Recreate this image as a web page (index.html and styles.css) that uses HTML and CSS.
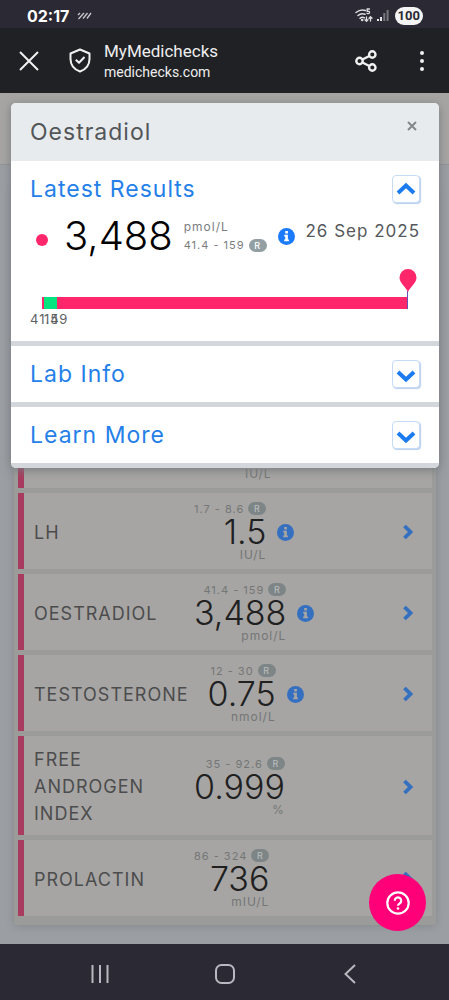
FILE: index.html
```html
<!DOCTYPE html>
<html lang="en">
<head>
<meta charset="utf-8">
<meta name="viewport" content="width=device-width, initial-scale=1">
<title>MyMedichecks</title>
<link rel="stylesheet" href="styles.css">
</head>
<body>
<div class="status">
  <span class="clock">02:17</span>
  <svg class="stripes" width="15" height="8" viewBox="0 0 15 8" fill="none" stroke="#c9c8cc" stroke-width="1.3"><path d="M1 3 3 1M1.500 7 7 1M6 6.500 10.500 1M10 6.500 14 1"/></svg>
  <svg class="wifi" width="18" height="15" viewBox="0 0 18 15" fill="none" stroke="#dddce0" stroke-width="1.5" stroke-linecap="round"><path d="M1 4.500C4 2 7.500 1.500 10.500 2.500M3 7.500c2-1.800 4.500-2.200 7-1.300M5 10.300c1.500-1.200 3-1.300 4.500-.5"/><circle cx="7.200" cy="12" r=".6" fill="#dddce0"/><path stroke-width="1.300" d="M14.500 1h-2.300v2.300c2-.3 2.600.4 2.300 1.500-.3.900-1.500 1-2.500.5M11.500 9v4M10 11.700l1.500 1.600 1.500-1.600M15.500 13V9M14 10.300l1.500-1.600 1.500 1.600"/></svg>
  <svg class="signal" width="12" height="13" viewBox="0 0 12 13"><path fill="#e6e5e8" d="M0 10h2v2H0zM3 8h2v4H3z"/><path fill="#77757d" d="M6.300 4h2v8h-2zM9.600 1h2v11h-2z"/></svg>
  <span class="battery">100</span>
</div>
<header class="toolbar">
  <button class="tool" aria-label="Close"><svg width="20" height="20" viewBox="0 0 20 20" fill="none" stroke="#f1f1f2" stroke-width="2"><path d="M1 1 19 19M19 1 1 19"/></svg></button>
  <button class="tool shield" aria-label="Site security"><svg width="22" height="25" viewBox="0 0 22 25" fill="none" stroke="#f1f1f2" stroke-width="2" stroke-linejoin="round"><path d="M11 1.500 20.500 5.500V11c0 6-4 10.500-9.500 12.500C5.500 21.500 1.500 17 1.500 11V5.500z"/><path d="m6.800 11.800 3.200 3 5.500-5.800"/></svg></button>
  <div class="site"><div class="site-name">MyMedichecks</div><div class="site-url">medichecks.com</div></div>
  <button class="tool" aria-label="Share"><svg width="22" height="22" viewBox="0 0 22 22" fill="none" stroke="#f1f1f2" stroke-width="2.400"><circle cx="4.500" cy="11" r="3.200"/><circle cx="17.300" cy="4.500" r="3.200"/><circle cx="17.300" cy="17.500" r="3.200"/><path d="m7.400 9.500 7-3.500M7.400 12.500l7 3.500"/></svg></button>
  <button class="tool more" aria-label="More"><svg width="4" height="20" viewBox="0 0 4 20" fill="#f1f1f2"><circle cx="2" cy="2" r="2"/><circle cx="2" cy="10" r="2"/><circle cx="2" cy="18" r="2"/></svg></button>
</header>

<main class="content">
  <svg hidden>
    <symbol id="info" viewBox="0 0 17 17"><circle cx="8.500" cy="8.500" r="8.500" fill="currentColor"/><path fill="var(--cut)" d="M7.200 3h2.700v2.500H7.200zM6.200 6.800h3.700v4.800h1V13.200H6.200v-1.600h1V8.400h-1z"/></symbol>
    <symbol id="next" viewBox="0 0 10 16"><path d="m1.500 2 6 6-6 6" fill="none" stroke="currentColor" stroke-width="3.800"/></symbol>
    <symbol id="down" viewBox="0 0 20 14"><path d="m2 3 8 7.500L18 3" fill="none" stroke="currentColor" stroke-width="4"/></symbol>
  </svg>
  <div class="page-head"></div>
  <div class="results">
    <a class="row" href="#"><span class="name"></span><span class="reading"><span class="unit">IU/L</span></span></a>
    <a class="row" href="#"><span class="name">LH</span><span class="reading"><span class="range">1.7 - 8.6 <b class="ref">R</b></span><span class="value">1.5</span><span class="unit">IU/L</span></span><svg class="info"><use href="#info"/></svg><svg class="next"><use href="#next"/></svg></a>
    <a class="row" href="#"><span class="name">OESTRADIOL</span><span class="reading"><span class="range">41.4 - 159 <b class="ref">R</b></span><span class="value">3,488</span><span class="unit">pmol/L</span></span><svg class="info"><use href="#info"/></svg><svg class="next"><use href="#next"/></svg></a>
    <a class="row" href="#"><span class="name">TESTOSTERONE</span><span class="reading"><span class="range">12 - 30 <b class="ref">R</b></span><span class="value">0.75</span><span class="unit">nmol/L</span></span><svg class="info"><use href="#info"/></svg><svg class="next"><use href="#next"/></svg></a>
    <a class="row" href="#"><span class="name">FREE ANDROGEN INDEX</span><span class="reading"><span class="range">35 - 92.6 <b class="ref">R</b></span><span class="value">0.999</span><span class="unit">%</span></span><svg class="next"><use href="#next"/></svg></a>
    <a class="row" href="#"><span class="name">PROLACTIN</span><span class="reading"><span class="range">86 - 324 <b class="ref">R</b></span><span class="value">736</span><span class="unit">mIU/L</span></span><svg class="next"><use href="#next"/></svg></a>
  </div>

  <div class="modal" role="dialog" aria-labelledby="modal-title">
    <div class="modal-head">
      <h1 id="modal-title">Oestradiol</h1>
      <button class="dismiss" aria-label="Close"><svg width="10" height="10" viewBox="0 0 10 10" stroke="#85888b" stroke-width="2"><path d="m1 1 8 8M9 1 1 9"/></svg></button>
    </div>
    <section>
      <div class="section-head"><h2>Latest Results</h2><button class="toggle open" aria-label="Collapse Latest Results"><svg width="20" height="14"><use href="#down"/></svg></button></div>
      <div class="latest">
        <span class="dot"></span>
        <span class="big">3,488</span>
        <span class="details"><span class="unit">pmol/L</span><span class="range">41.4 - 159 <b class="ref">R</b></span></span>
        <svg class="info"><use href="#info"/></svg>
        <time class="date" datetime="2025-09-26">26 Sep 2025</time>
      </div>
      <div class="chart">
        <div class="bar"><span class="normal"></span></div>
        <svg class="pin" width="18" height="40" viewBox="0 0 18 40"><path stroke="#6650b5" d="M8.500 22v18"/><path fill="#ff266c" d="M9 23C7 18 .5 14 .5 8.500a8.500 8.500 0 0 1 17 0C17.500 14 11 18 9 23z"/></svg>
        <span class="tick low">41.4</span>
        <span class="tick high">159</span>
      </div>
    </section>
    <section><div class="section-head"><h2>Lab Info</h2><button class="toggle" aria-label="Expand Lab Info"><svg width="20" height="14"><use href="#down"/></svg></button></div></section>
    <section><div class="section-head"><h2>Learn More</h2><button class="toggle" aria-label="Expand Learn More"><svg width="20" height="14"><use href="#down"/></svg></button></div></section>
  </div>

  <button class="help" aria-label="Help"><svg width="24" height="24" viewBox="0 0 24 24" fill="none" stroke="#fff" stroke-width="2.200"><circle cx="12" cy="12" r="10.700"/><path d="M8.800 9.700a3.200 3.200 0 1 1 5 2.600c-1.200.8-1.800 1.300-1.800 2.500"/><circle cx="12" cy="17.500" r="1.300" fill="#fff" stroke="none"/></svg></button>
</main>

<nav class="system">
  <button aria-label="Recent apps"><svg width="20" height="20" viewBox="0 0 20 20" stroke="#b9b8c0" stroke-width="2"><path d="M2.500 1v18M10 1v18M17.500 1v18"/></svg></button>
  <button aria-label="Home"><svg width="20" height="20" viewBox="0 0 20 20" fill="none" stroke="#b9b8c0" stroke-width="2"><rect x="1" y="1" width="18" height="18" rx="5.500"/></svg></button>
  <button aria-label="Back"><svg width="12" height="20" viewBox="0 0 12 20" fill="none" stroke="#b9b8c0" stroke-width="2"><path d="m11 1-9.500 9 9.500 9"/></svg></button>
</nav>
</body>
</html>
```

FILE: styles.css
```css
* { box-sizing: border-box; }
body {
  margin: 0;
  min-height: 100vh;
  display: flex;
  flex-direction: column;
  background: #2b2933;
  color: #4c4f54;
  font-family: Inter, sans-serif;
}
button { border: 0; padding: 0; background: none; display: flex; align-items: center; justify-content: center; }
svg { display: block; flex: none; }
svg[hidden] { display: none; }
h1, h2 { margin: 0; font-size: 23px; font-weight: 400; line-height: 30px; letter-spacing: 1px; }

.status { display: flex; align-items: center; height: 28px; padding: 3px 26px 0 27px; color: #fff; }
.clock { font: 700 16px/20px Inter, sans-serif; }
.stripes { margin-left: 8px; }
.wifi { margin-left: auto; }
.signal { margin: 0 6px 0 4px; }
.battery { padding: 0 3px; border-radius: 9px; background: #f4f4f5; color: #2b2933; font: 700 13px/18px Roboto, sans-serif; }

.toolbar { display: flex; align-items: center; height: 65px; padding: 0 25px 0 19px; background: #202124; color: #eeeeef; font-family: Roboto, sans-serif; }
.shield { margin-left: 30px; }
.site { flex: 1; margin-left: 13px; }
.site-name { font-size: 17px; line-height: 22px; }
.site-url { font-size: 14px; line-height: 20px; }
.more { margin-left: 43px; }

.content { --cut: #fff; position: relative; flex: 1; display: flex; flex-direction: column; background: #9b9ea3; }
.page-head { height: 72px; flex: none; background: #a6a5a3; border-bottom: 1px solid #929395; }
.results {
  flex: 1;
  display: flex;
  flex-direction: column;
  justify-content: flex-end;
  gap: 5px;
  margin: 20px 13px 19px 14px;
  padding: 0 4px 9px;
  border-radius: 4px;
  background: #9b9b99;
  box-shadow: 0 1px 8px #85888c;
}
.row {
  --cut: #a6a5a3;
  display: flex;
  align-items: center;
  min-height: 76px;
  padding: 9px 19px 7px 10px;
  border-left: 6px solid #a83b5f;
  background: #a6a5a3;
  color: #4c4c4d;
  text-decoration: none;
}
.name { width: min-content; min-width: 141px; margin-right: 19px; padding: 1px 0; font-size: 18px; font-weight: 400; line-height: 27px; letter-spacing: 1px; }
.reading { display: flex; flex-direction: column; align-items: flex-end; }
.row:first-child .reading { margin: 46px 0 0 51px; }
.range, .unit { color: #747676; font-size: 12px; line-height: 14px; letter-spacing: 1px; }
.range { font-size: 11px; }
.value { color: #202021; font-size: 34px; font-weight: 300; line-height: 32px; }
.ref { display: inline-block; width: 18px; border-radius: 7px; background: #7d8587; color: #b7baba; font-size: 9px; font-weight: 500; line-height: 13px; text-align: center; vertical-align: top; }
.info { width: 17px; height: 17px; margin-left: 11px; color: #356fc0; }
.next { width: 10px; height: 16px; margin-left: auto; color: #356fc0; }

.modal { position: absolute; top: 10px; left: 11px; right: 10px; overflow: hidden; border-radius: 5px; background: #fff; box-shadow: 0 2px 10px #77797d; }
.modal-head { display: flex; justify-content: space-between; padding: 14px 21px 14px 19px; background: #e7ebee; color: #535659; }
.dismiss { width: 12px; height: 18px; }
.modal section { padding: 13px 19px; border-bottom: 5px solid #d3d7db; }
.section-head { display: flex; align-items: center; justify-content: space-between; color: #257fe9; }
.toggle { width: 28px; height: 28px; padding-top: 4px; border: 1px solid #c5dbf6; border-radius: 4px; background: #fff; box-shadow: 1px 1px 1px #b9cfee; color: #1c7bef; }
.toggle.open { padding: 0; }
.open svg { transform: rotate(180deg); }
.latest { display: flex; align-items: center; padding: 11px 0 0 6px; height: 53px; }
.dot { width: 12px; height: 12px; margin-top: 8px; border-radius: 50%; background: #ff266c; }
.big { margin-left: 16px; color: #000; font-size: 40px; font-weight: 300; line-height: 42px; }
.details { display: flex; flex-direction: column; margin-left: 11px; }
.details .unit, .details .range { color: #7b7d80; line-height: 19px; }
.details .ref { margin-top: 3px; background: #949fa3; color: #fff; }
.latest .info { color: #1c7bfc; }
.date { margin: 0 0 11px auto; color: #55585b; font-size: 17px; line-height: 20px; letter-spacing: 1px; white-space: nowrap; }
.chart { position: relative; padding: 40px 12px 19px; }
.bar { display: flex; height: 12px; padding-left: 2px; background: #ff266c; }
.normal { width: 13px; background: #05e57f; }
.pin { position: absolute; top: 12px; right: 3px; }
.tick { position: absolute; top: 54px; color: #5f6265; font-size: 13px; line-height: 16px; letter-spacing: 1px; }
.low { left: 0; }
.high { left: 14px; }

.help { position: absolute; right: 23px; bottom: 13px; width: 57px; height: 57px; border-radius: 50%; background: #ff0078; }
.system { display: grid; grid-template-columns: repeat(3, 1fr); height: 56px; padding: 3px 37px 0; }
```
